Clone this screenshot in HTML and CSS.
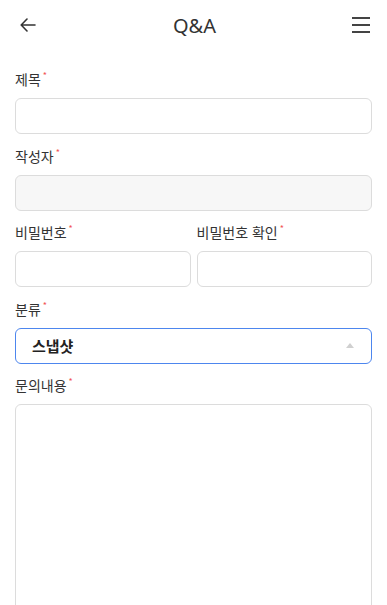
FILE: index.html
```html
<!DOCTYPE html>
<html lang="ko">
<head>
<meta charset="utf-8">
<title>Q&amp;A</title>
<link rel="stylesheet" href="styles.css">
</head>
<body>
<header class="topbar">
  <button class="icon-btn" aria-label="뒤로">
    <svg width="16" height="14" viewBox="0 0 16 14" fill="none" stroke="#333" stroke-width="1.6" stroke-linecap="round" stroke-linejoin="round"><path d="M15 7H1.5M7 1L1.2 7L7 13"/></svg>
  </button>
  <h1 class="title">Q&amp;A</h1>
  <button class="icon-btn" aria-label="메뉴">
    <svg width="20" height="18" viewBox="0 0 20 18" fill="none" stroke="#444" stroke-width="2"><path d="M1 2H19M1 9H19M1 16H19"/></svg>
  </button>
</header>
<main class="form">
  <div class="field">
    <label class="label">제목<span class="req">*</span></label>
    <div class="input"></div>
  </div>
  <div class="field">
    <label class="label">작성자<span class="req">*</span></label>
    <div class="input input-disabled"></div>
  </div>
  <div class="row">
    <div class="field">
      <label class="label">비밀번호<span class="req">*</span></label>
      <div class="input"></div>
    </div>
    <div class="field">
      <label class="label">비밀번호 확인<span class="req">*</span></label>
      <div class="input"></div>
    </div>
  </div>
  <div class="field">
    <label class="label">분류<span class="req">*</span></label>
    <div class="input select"><span class="select-text">스냅샷</span><span class="caret"></span></div>
  </div>
  <div class="field">
    <label class="label">문의내용<span class="req">*</span></label>
    <div class="input textarea"></div>
  </div>
</main>
</body>
</html>
```
FILE: styles.css
```css
* { box-sizing: border-box; }
html, body { margin: 0; padding: 0; background: #fff; }
body {
  font-family: "Noto Sans CJK KR", "Noto Sans", sans-serif;
  color: #333;
  width: 387px;
  height: 605px;
  overflow: hidden;
}
.topbar {
  height: 50px;
  display: flex;
  align-items: center;
  justify-content: space-between;
  padding: 0 15px 0 17px;
}
.icon-btn {
  background: none;
  border: 0;
  padding: 0;
  display: flex;
  align-items: center;
  justify-content: center;
  width: 22px;
  height: 22px;
}
.title {
  margin: 0;
  font-family: "Noto Sans", sans-serif;
  font-weight: 400;
  font-size: 20px;
  color: #333;
  line-height: 1;
  padding-top: 1px;
}
.form {
  padding: 19px 15px 0;
  display: flex;
  flex-direction: column;
  gap: 11.5px;
}
.row {
  display: grid;
  grid-template-columns: 1fr 1fr;
  gap: 6px;
}
.field {
  display: flex;
  flex-direction: column;
}
.label {
  font-size: 14px;
  line-height: 21px;
  height: 21px;
  margin-bottom: 8px;
  color: #333;
  display: flex;
  align-items: flex-start;
}
.req {
  color: #f25555;
  font-size: 9px;
  line-height: 1;
  margin-left: 2px;
  margin-top: 2px;
}
.input {
  height: 36px;
  border: 1px solid #dcdcdc;
  border-radius: 6px;
  background: #fff;
}
.input-disabled { background: #f7f7f7; }
.select {
  border-color: #4d86ee;
  display: flex;
  align-items: center;
  justify-content: space-between;
  padding: 0 16px 0 16px;
}
.select-text {
  font-size: 15px;
  font-weight: 700;
  color: #222;
}
.caret {
  width: 0;
  height: 0;
  border-left: 4px solid transparent;
  border-right: 4px solid transparent;
  border-bottom: 5px solid #d0d0d0;
  margin-right: 1px;
}
.textarea { height: 260px; }
```
